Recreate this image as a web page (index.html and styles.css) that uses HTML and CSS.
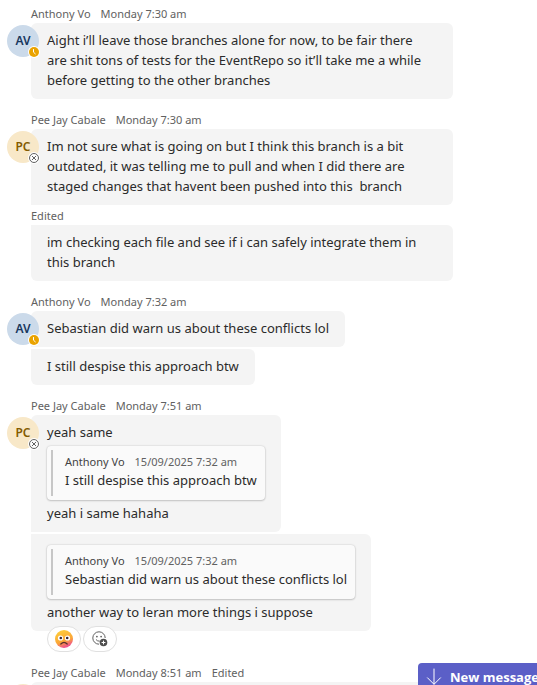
FILE: index.html
```
<!DOCTYPE html>
<html lang="en">
<head>
<meta charset="utf-8">
<title>Chat</title>
<link rel="stylesheet" href="styles.css">
</head>
<body>
<svg class="defs" aria-hidden="true">
  <symbol id="away" viewBox="0 0 12 12">
    <circle cx="6" cy="6" r="6" fill="#fff"/>
    <circle cx="6" cy="6" r="5" fill="#eaa300"/>
    <path d="M5.500 3.500v2.700l1.800 1.600" fill="none" stroke="#fff" stroke-linecap="round"/>
  </symbol>
  <symbol id="offline" viewBox="0 0 12 12">
    <circle cx="6" cy="6" r="6" fill="#fff"/>
    <circle cx="6" cy="6" r="4.500" fill="none" stroke="#616161"/>
    <path d="M4.200 4.200l3.600 3.600M7.800 4.200L4.200 7.800" fill="none" stroke="#616161" stroke-linecap="round"/>
  </symbol>
</svg>
<main class="chat">
  <section class="group">
    <header class="meta"><span>Anthony Vo</span><time>Monday 7:30 am</time></header>
    <div class="stack">
      <div class="avatar avatar-blue">AV<svg class="presence"><use href="#away"/></svg></div>
      <div class="bubble first last wide">Aight i’ll leave those branches alone for now, to be fair there<br>are shit tons of tests for the EventRepo so it’ll take me a while<br>before getting to the other branches</div>
    </div>
  </section>

  <section class="group">
    <header class="meta"><span>Pee Jay Cabale</span><time>Monday 7:30 am</time></header>
    <div class="stack">
      <div class="avatar avatar-gold">PC<svg class="presence"><use href="#offline"/></svg></div>
      <div class="bubble first">Im not sure what is going on but I think this branch is a bit outdated, it was telling me to pull and when I did there are staged changes that havent been pushed into this&nbsp; branch</div>
      <div class="meta meta-inner"><span>Edited</span></div>
      <div class="bubble last">im checking each file and see if i can safely integrate them in this branch</div>
    </div>
  </section>

  <section class="group">
    <header class="meta"><span>Anthony Vo</span><time>Monday 7:32 am</time></header>
    <div class="stack">
      <div class="avatar avatar-blue">AV<svg class="presence"><use href="#away"/></svg></div>
      <div class="bubble first">Sebastian did warn us about these conflicts lol</div>
      <div class="bubble last">I still despise this approach btw</div>
    </div>
  </section>

  <section class="group">
    <header class="meta"><span>Pee Jay Cabale</span><time>Monday 7:51 am</time></header>
    <div class="stack">
      <div class="avatar avatar-gold">PC<svg class="presence"><use href="#offline"/></svg></div>
      <div class="bubble first">
        <p>yeah same</p>
        <blockquote class="quote">
          <div class="quote-meta"><span>Anthony Vo</span><time>15/09/2025 7:32 am</time></div>
          <p>I still despise this approach btw</p>
        </blockquote>
        <p>yeah i same hahaha</p>
      </div>
      <div class="bubble last">
        <blockquote class="quote">
          <div class="quote-meta"><span>Anthony Vo</span><time>15/09/2025 7:32 am</time></div>
          <p>Sebastian did warn us about these conflicts lol</p>
        </blockquote>
        <p>another way to leran more things i suppose</p>
      </div>
    </div>
    <div class="reactions">
      <button class="reaction" type="button" aria-label="Worried reaction">
        <svg width="18" height="18" viewBox="0 0 18 18">
          <defs><linearGradient id="face" x1="0" y1="0" x2=".4" y2="1"><stop offset="0" stop-color="#ffd43b"/><stop offset=".7" stop-color="#fba637"/><stop offset="1" stop-color="#f0568a"/></linearGradient></defs>
          <circle cx="9" cy="9" r="9" fill="url(#face)"/>
          <circle cx="5.500" cy="8" r="2.600" fill="#fff"/><circle cx="12.500" cy="8" r="2.600" fill="#fff"/>
          <circle cx="5.800" cy="8" r="1.300" fill="#35232f"/><circle cx="12.200" cy="8" r="1.300" fill="#35232f"/>
          <path d="M5.800 14q3.200-3.400 6.400 0" stroke="#5a2f2b" stroke-width="1.200" fill="none" stroke-linecap="round"/>
        </svg>
      </button>
      <button class="reaction" type="button" aria-label="Add reaction">
        <svg width="16" height="16" viewBox="0 0 16 16">
          <path d="M13.200 7A6.200 6.200 0 1 0 7 13.200" fill="none" stroke="#616161"/>
          <circle cx="4.900" cy="5.600" r=".9" fill="#616161"/><circle cx="9.100" cy="5.600" r=".9" fill="#616161"/>
          <path d="M4.200 8.800q1.200 1.600 3.200 1.400" fill="none" stroke="#616161" stroke-linecap="round"/>
          <circle cx="11.500" cy="11.500" r="3.800" fill="#4f4f4f"/>
          <path d="M11.500 9.600v3.800M9.600 11.500h3.800" stroke="#fff"/>
        </svg>
      </button>
    </div>
  </section>

  <section class="group">
    <header class="meta"><span>Pee Jay Cabale</span><time>Monday 8:51 am</time><span>Edited</span></header>
    <div class="stack">
      <div class="avatar avatar-gold"></div>
      <div class="bubble first wide"></div>
    </div>
  </section>

  <button class="new-messages" type="button">
    <svg width="16" height="18" viewBox="0 0 16 18"><path d="M8 1v15M1.500 9.800L8 16.300l6.500-6.500" fill="none" stroke="#fff" stroke-linecap="round" stroke-linejoin="round"/></svg>
    New messages
  </button>
</main>
</body>
</html>
```
FILE: styles.css
```
* { box-sizing: border-box; }
body, p, blockquote { margin: 0; }
body {
  background: #fff;
  color: #2b2b2b;
  font: 13px/20px "Noto Sans", "Open Sans", sans-serif;
}
.defs { position: absolute; width: 0; height: 0; }
.chat {
  position: relative;
  height: 100vh;
  overflow: hidden;
  padding: 6px 84px 0 31px;
}
.group { margin-bottom: 13px; }
.meta, .quote-meta {
  display: flex;
  gap: 10px;
  font-size: 11px;
  line-height: 16px;
  color: #616161;
}
.meta { margin-bottom: 1px; }
.meta-inner { margin-top: 1px; margin-bottom: -1px; }
.stack {
  position: relative;
  display: flex;
  flex-direction: column;
  align-items: flex-start;
  gap: 2px;
}
.avatar {
  position: absolute;
  left: -24px;
  top: 2px;
  width: 32px;
  height: 32px;
  border-radius: 50%;
  font-size: 12px;
  font-weight: 600;
  line-height: 32px;
  text-align: center;
}
.avatar-blue { background: #cbdaea; color: #17365d; }
.avatar-gold { background: #f8e8c8; color: #835b00; }
.presence {
  position: absolute;
  right: -1px;
  bottom: -1px;
  width: 12px;
  height: 12px;
}
.bubble {
  max-width: 100%;
  padding: 7px 16px 9px;
  background: #f4f4f4;
  border-radius: 0 6px 6px 0;
}
.first { border-top-left-radius: 6px; }
.last { border-bottom-left-radius: 6px; }
.wide { width: 100%; }
.quote {
  position: relative;
  width: fit-content;
  height: 54px;
  margin: 4px 0 3px;
  padding: 8px 8px 8px 18px;
  background: #fafafa;
  border-radius: 4px;
  box-shadow: 0 0 2px rgba(0, 0, 0, .2), 0 1px 2px rgba(0, 0, 0, .16);
}
.quote::before {
  content: "";
  position: absolute;
  left: 4px;
  top: 4px;
  bottom: 4px;
  width: 2px;
  background: #c7c7c7;
}
.quote-meta span { color: #424242; }
.reactions {
  position: relative;
  display: flex;
  gap: 2px;
  margin: -5px 0 0 16px;
}
.reaction {
  display: flex;
  align-items: center;
  justify-content: center;
  width: 34px;
  height: 26px;
  padding: 0;
  background: #fff;
  border: 1px solid #e0e0e0;
  border-radius: 13px;
}
.new-messages {
  position: absolute;
  left: calc(100% - 119px);
  bottom: -6px;
  display: flex;
  align-items: center;
  gap: 8px;
  height: 28px;
  padding: 0 8px;
  background: #5b5fc7;
  border: 0;
  border-radius: 4px;
  color: #fff;
  font: 700 13px/20px "Open Sans", "Noto Sans", sans-serif;
  white-space: nowrap;
}
```
